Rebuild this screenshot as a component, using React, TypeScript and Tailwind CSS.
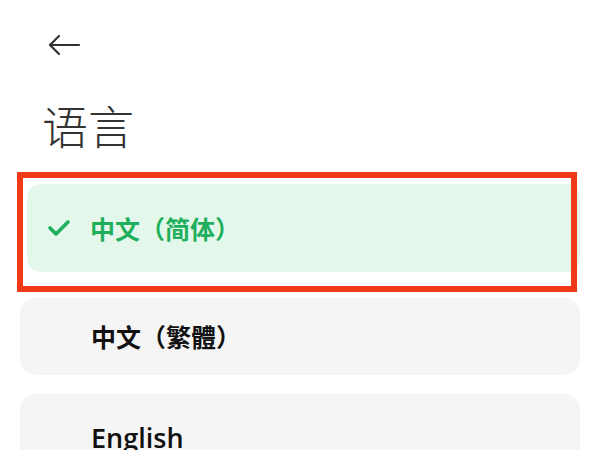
import React from "react";

export default function App() {
  const font = { fontFamily: '"Noto Sans CJK SC", "Noto Sans", sans-serif' };
  return (
    <div className="relative w-[600px] h-[450px] overflow-hidden bg-white" style={font}>
      <div className="pl-[48px] pt-[34px] h-[56px]">
        <svg width="33" height="22" viewBox="0 0 33 22" fill="none" stroke="#333" strokeWidth="2.2" strokeLinecap="round" strokeLinejoin="round">
          <path d="M2 11 H31" />
          <path d="M11 2 L2 11 L11 20" />
        </svg>
      </div>
      <div className="pl-[42px] pt-[45px] h-[146px] text-[46px] leading-none font-light text-[#333]">语言</div>
      <div className="flex flex-col">
        <div className="ml-[27px] w-[553px] h-[88px] mt-[-18px] rounded-[14px] bg-[#e3f8ea] flex items-center">
          <svg className="ml-[20px]" width="24" height="20" viewBox="0 0 24 20" fill="none" stroke="#1faf5c" strokeWidth="3.6" strokeLinecap="round" strokeLinejoin="round">
            <path d="M3 10 L9 16 L21 4" />
          </svg>
          <span className="ml-[19px] text-[25px] font-bold text-[#1faf5c] leading-none">中文（简体）</span>
        </div>
        <div className="ml-[20px] w-[560px] h-[77px] mt-[26px] rounded-[16px] bg-[#f5f5f6] flex items-center pl-[71px]">
          <span className="text-[25px] font-bold text-[#111] leading-none">中文（繁體）</span>
        </div>
        <div className="ml-[20px] w-[560px] h-[86px] mt-[19px] rounded-[16px] bg-[#f5f5f6] flex items-center pl-[71px]">
          <span className="text-[27px] font-semibold text-[#111] leading-none" style={{ fontFamily: '"Open Sans", "Noto Sans", sans-serif' }}>English</span>
        </div>
      </div>
      <div className="absolute left-[17px] top-[172px] w-[560px] h-[120px] border-[6px] border-[#f03a17]" />
    </div>
  );
}
